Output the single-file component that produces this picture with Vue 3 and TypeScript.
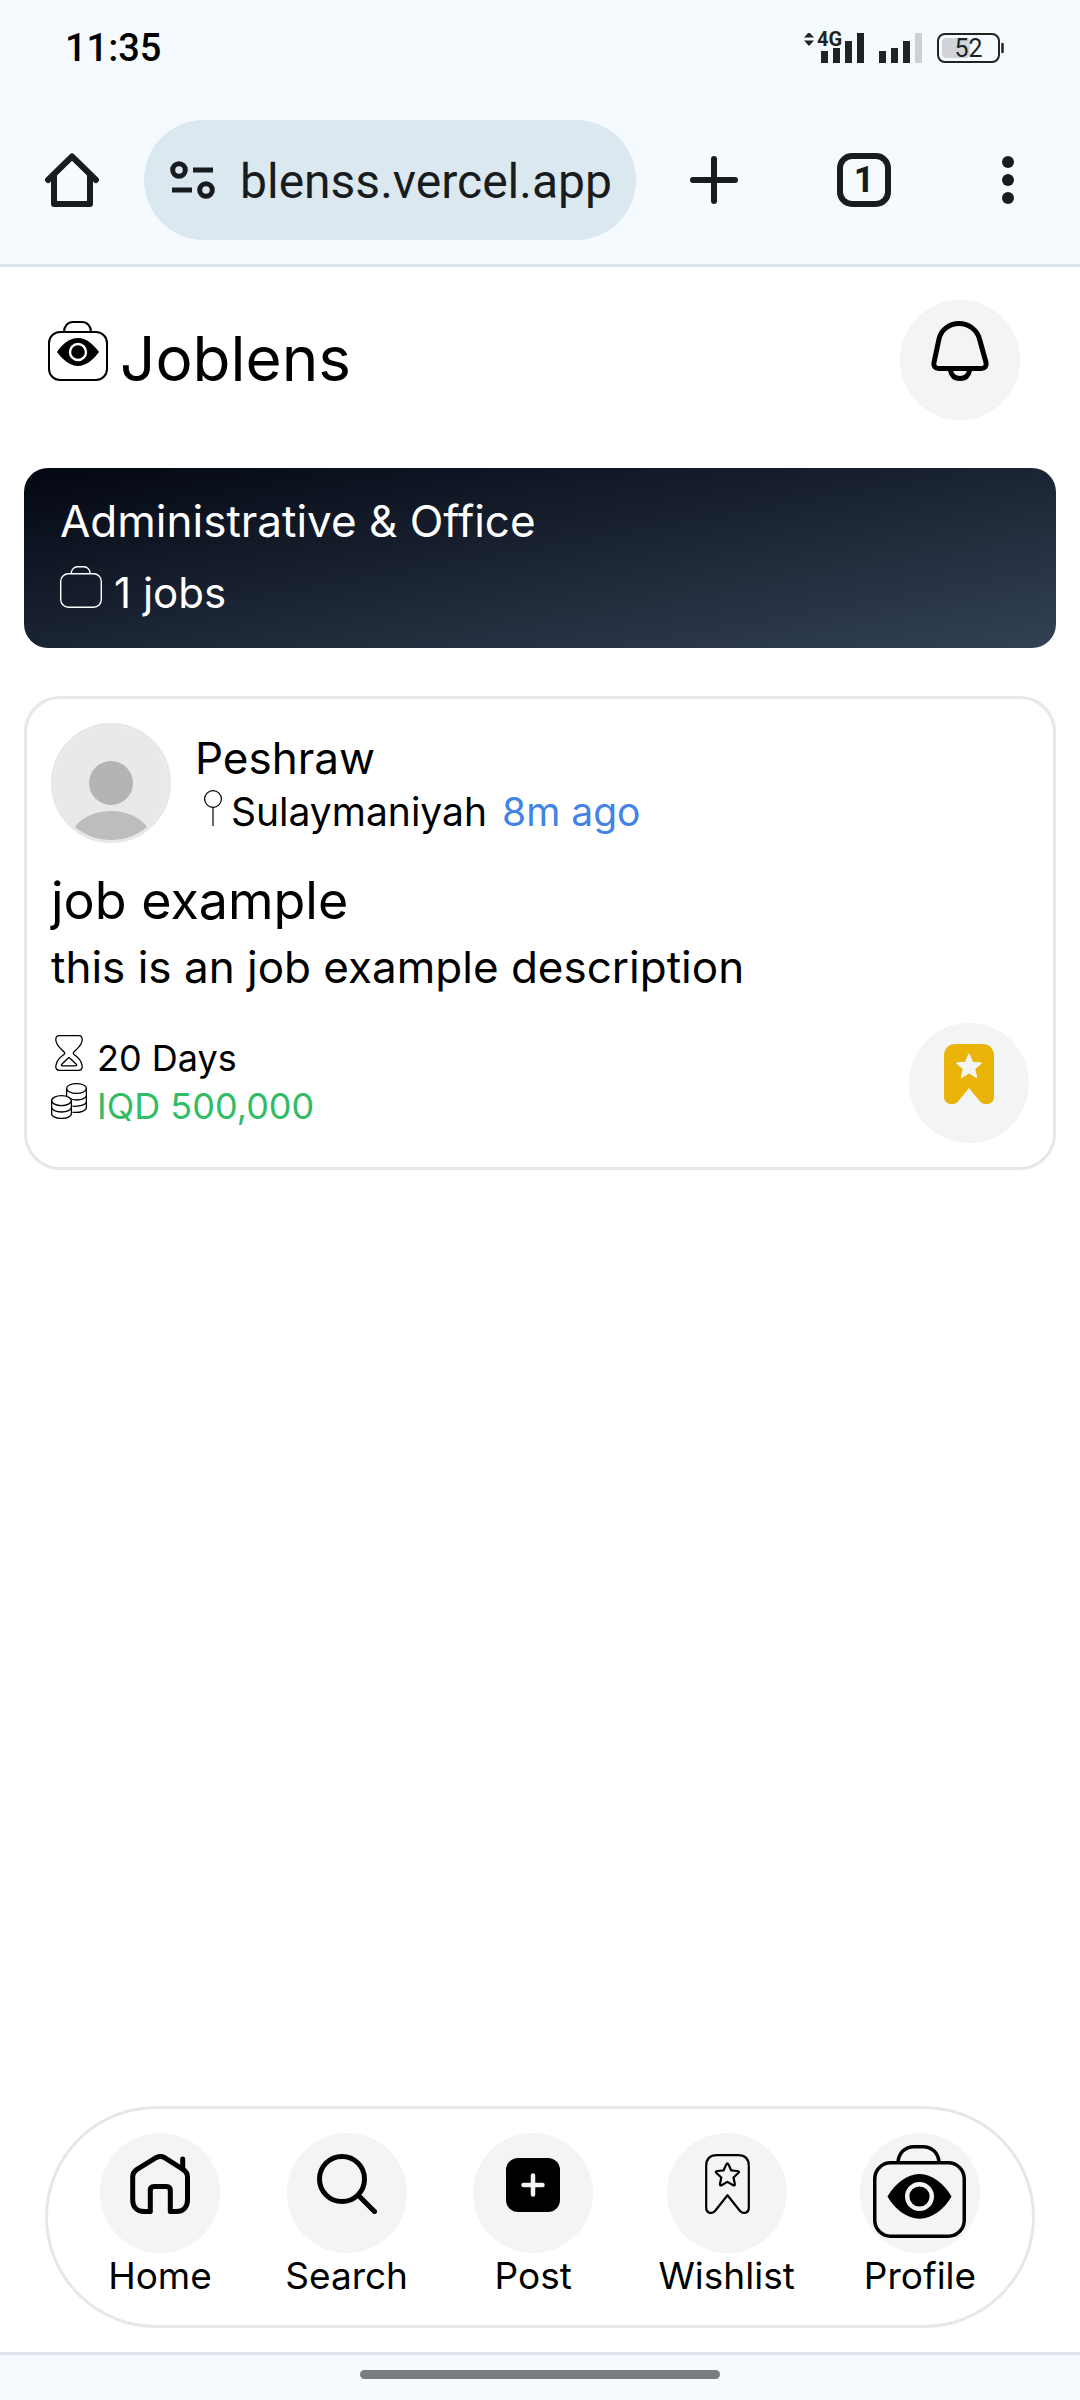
<script setup lang="ts">
import { ref } from 'vue'

interface NavItem {
  id: string
  label: string
}

const address = ref('blenss.vercel.app')

const navItems: NavItem[] = [
  { id: 'home', label: 'Home' },
  { id: 'search', label: 'Search' },
  { id: 'post', label: 'Post' },
  { id: 'wishlist', label: 'Wishlist' },
  { id: 'profile', label: 'Profile' },
]

// Five-pointed star with rounded tips.
function starPath(cx: number, cy: number, outer: number, inner: number): string {
  const point = (radius: number, degrees: number) => {
    const a = (degrees * Math.PI) / 180
    return { x: cx + radius * Math.cos(a), y: cy + radius * Math.sin(a) }
  }
  const f = (n: number) => n.toFixed(2)
  let d = ''
  for (let i = 0; i < 5; i++) {
    const angle = -90 + i * 72
    const tip = point(outer, angle)
    const before = point(inner, angle - 36)
    const after = point(inner, angle + 36)
    const t = 0.68
    const ax = before.x + (tip.x - before.x) * t
    const ay = before.y + (tip.y - before.y) * t
    const bx = after.x + (tip.x - after.x) * t
    const by = after.y + (tip.y - after.y) * t
    d += `${i === 0 ? 'M' : 'L'}${f(ax)} ${f(ay)} Q${f(tip.x)} ${f(tip.y)} ${f(bx)} ${f(by)} L${f(after.x)} ${f(after.y)} `
  }
  return d + 'Z'
}

const outlineStar = starPath(30.4, 21.5, 13.5, 6.4)
const solidStar = starPath(30, 23, 15, 6.6)
</script>

<template>
  <div class="screen">
    <div class="status">
      <time class="clock">11:35</time>
      <div class="indicators">
        <div class="signal">
          <svg width="60" height="30" viewBox="0 0 60 30" aria-hidden="true">
            <path d="M0 4.500 L5 -1 L10 4.500Z M0 7.500 H10 L5 13Z" fill="#222" />
            <path d="M17 18h7v12h-7z M29 15h7v15h-7z M41 8h7v22h-7z M53 0h7v30h-7z" fill="#222" />
          </svg>
          <span class="network">4G</span>
        </div>
        <svg width="43" height="30" viewBox="0 0 43 30" aria-hidden="true">
          <path d="M0 18h7v12H0z M12 15h7v15h-7z M24 8h7v22h-7z" fill="#222" />
          <path d="M36 0h7v30h-7z" fill="#cdd0d4" />
        </svg>
        <div class="battery">
          <svg width="67" height="30" viewBox="0 0 67 30" aria-hidden="true">
            <rect x="5" y="5" width="28" height="20" rx="4" fill="#d0d4d8" />
            <rect x="1" y="1" width="61" height="28" rx="7" fill="none" stroke="#222" stroke-width="2" />
            <path d="M65.500 11V19" stroke="#222" stroke-width="2.500" stroke-linecap="round" />
          </svg>
          <span class="charge">52</span>
        </div>
      </div>
    </div>

    <div class="toolbar">
      <button class="tool" type="button" aria-label="Home page">
        <svg width="54" height="54" viewBox="0 0 54 54" fill="none" stroke="#191c1e" stroke-width="6" stroke-linecap="round" stroke-linejoin="round">
          <path d="M3 27 L27 3.500 L51 27" />
          <path d="M9 22 V51 H45 V22" />
        </svg>
      </button>
      <div class="address">
        <button class="tool" type="button" aria-label="Site settings">
          <svg width="46" height="40" viewBox="0 0 46 40" fill="none" stroke="#191c1e" stroke-width="5">
            <circle cx="9" cy="10" r="6.300" />
            <circle cx="36" cy="30" r="6.300" />
            <path d="M23 10 H43 M2 30 H22" />
          </svg>
        </button>
        <input v-model="address" class="url" type="text" aria-label="Address" />
      </div>
      <div class="actions">
        <button class="tool" type="button" aria-label="New tab">
          <svg width="54" height="54" viewBox="0 0 54 54" stroke="#191c1e" stroke-width="6" stroke-linecap="round">
            <path d="M27 6 V48 M6 27 H48" />
          </svg>
        </button>
        <button class="tool tabs" type="button" aria-label="Open tabs: 1">1</button>
        <button class="tool" type="button" aria-label="More options">
          <svg width="42" height="54" viewBox="0 0 42 54" fill="#191c1e">
            <circle cx="21" cy="9" r="6" />
            <circle cx="21" cy="27" r="6" />
            <circle cx="21" cy="45" r="6" />
          </svg>
        </button>
      </div>
    </div>

    <div class="page">
      <header class="masthead">
        <h1 class="brand">
          <svg width="60" height="60" viewBox="0 0 60 60" aria-hidden="true">
            <g fill="none" stroke="#000" stroke-width="2">
              <rect x="1" y="11" width="58" height="48" rx="11" />
              <path d="M16 11 C16 5 20 1 25 1 H34 C39 1 43 5 43 11" />
            </g>
            <path d="M9 31 C14 23 22 17 30 17 S45 23 51 31 C46 38 38 45 30 45 S14 38 9 31Z" />
            <circle cx="30" cy="31" r="8" fill="#000" stroke="#fff" stroke-width="2.400" />
          </svg>
          <span>Joblens</span>
        </h1>
        <button class="round" type="button" aria-label="Notifications">
          <svg width="60" height="60" viewBox="0 0 60 60" fill="none" stroke="#000" stroke-width="5" stroke-linejoin="round">
            <path d="M29 2.500 C19 2.500 11 9 9 18 L4 41.500 C3.200 45 5 47.500 8.500 47.500 H51.500 C55 47.500 56.800 45 56 41.500 L49.500 18 C47 9 39 2.500 29 2.500Z" />
            <path d="M20.500 49.500 C21.500 54.500 25 57.500 30 57.500 S38.500 54.500 39.500 49.500" />
          </svg>
        </button>
      </header>

      <main class="content">
        <section class="banner">
          <h2 class="banner-title">Administrative &amp; Office</h2>
          <p class="banner-count">
            <svg width="42" height="42" viewBox="0 0 60 60" fill="none" stroke="#fff" stroke-width="2" aria-hidden="true">
              <rect x="1" y="11" width="58" height="48" rx="11" />
              <path d="M16 11 C16 5 20 1 25 1 H34 C39 1 43 5 43 11" />
            </svg>
            <span>1 jobs</span>
          </p>
        </section>

        <article class="card">
          <div class="poster">
            <svg class="avatar" viewBox="3 3 114 114" role="img" aria-label="Peshraw">
              <rect width="120" height="120" fill="#e9e9e9" />
              <circle cx="60" cy="60" r="22" fill="#b4b4b4" />
              <ellipse cx="60" cy="118" rx="41" ry="30" fill="#bdbdbd" />
            </svg>
            <div class="poster-info">
              <h3 class="name">Peshraw</h3>
              <p class="meta">
                <svg width="36" height="36" viewBox="0 0 36 36" fill="none" stroke="#000" stroke-width="1.200" aria-hidden="true">
                  <circle cx="18" cy="9" r="8.400" />
                  <path d="M18 17.500 V36" />
                </svg>
                <span>Sulaymaniyah</span>
                <span class="ago">8m ago</span>
              </p>
            </div>
          </div>
          <h4 class="title">job example</h4>
          <p class="description">this is an job example description</p>
          <div class="terms">
            <div class="term-list">
              <p class="term">
                <svg width="36" height="36" viewBox="0 0 36 36" fill="none" stroke="#000" stroke-width="1.300" stroke-linejoin="round" aria-hidden="true">
                  <path d="M8.500 .7 H27.500 C30.500 .7 31.300 2.500 31.200 5 C30.800 11 26 13.500 22.500 17.500 Q22 18.200 22.500 19 C26.500 22 30.500 25 31.200 31 C31.500 34 30 35.300 27.500 35.300 H8.500 C6 35.300 4.500 34 4.800 31 C5.500 25 9.500 22 13.500 19 Q14 18.200 13.500 17.500 C10 13.500 5.200 11 4.800 5 C4.700 2.500 5.500 .7 8.500 .7Z" />
                  <path d="M17 23.200 Q18 22.300 19 23.200 L25.500 29.500 Q26 30.800 24.500 30.800 H11.500 Q10 30.800 10.500 29.500Z" />
                </svg>
                <span>20 Days</span>
              </p>
              <p class="term">
                <svg width="36" height="36" viewBox="0 0 36 36" fill="none" stroke="#000" stroke-width="1.300" aria-hidden="true">
                  <ellipse cx="25.500" cy="5.500" rx="9.900" ry="4.900" />
                  <path d="M15.600 5.500 V13 M35.400 5.500 V24.500 C35.400 27.500 30 30 21.500 29.300 M35.400 12 C35.400 15 31 17 25.500 17 Q21.500 16.800 19 15.500 M35.400 18.500 C35.400 21.500 30 23.700 21.500 23.200" />
                  <ellipse cx="10.500" cy="17.600" rx="9.900" ry="5" fill="#fff" />
                  <path d="M.6 17.600 V30.500 C.6 33.500 5 35.400 10.500 35.400 S20.400 33.500 20.400 30.500 V17.600 M.6 24 C.6 27 5 29 10.500 29 S20.400 27 20.400 24" />
                </svg>
                <span class="salary">IQD 500,000</span>
              </p>
            </div>
            <button class="round" type="button" aria-label="Remove from wishlist">
              <svg width="60" height="60" viewBox="0 0 60 60">
                <path d="M5 12 C5 4.500 9.500 0 17 0 H43 C50.500 0 55 4.500 55 12 V53 C55 60 46 62.500 41 57.500 L30 44 L19 57.500 C14 62.500 5 60 5 53Z" fill="#eab308" />
                <path :d="solidStar" fill="#f3f4f6" />
              </svg>
            </button>
          </div>
        </article>
      </main>

      <nav class="nav" aria-label="Main">
        <a v-for="item in navItems" :key="item.id" class="nav-item" :href="'#' + item.id">
          <span class="round" :class="{ centered: item.id === 'profile' }">
            <svg v-if="item.id === 'home'" width="60" height="60" viewBox="0 0 60 60" fill="none" stroke="#000" stroke-width="5" stroke-linecap="round" stroke-linejoin="round">
              <path d="M20.300 57.500 H14 C7 57.500 2.700 53 2.700 46 V23 C2.700 19.500 4 17.300 7 15.300 L26 3.700 C29 2.100 32 2.100 34.500 3.700 L53 15.300 C56 17.300 57.500 19.500 57.500 23 V46 C57.500 53 53 57.500 46 57.500 H40.300 V36.500 C40.300 34 39 32.500 36.500 32.500 H24 C21.500 32.500 20.300 34 20.300 36.500Z" />
              <path d="M52.700 5 V15" />
            </svg>
            <svg v-else-if="item.id === 'search'" width="60" height="60" viewBox="0 0 60 60" fill="none" stroke="#000" stroke-width="5" stroke-linecap="round">
              <circle cx="25" cy="25" r="22.500" />
              <path d="M42 42 L57.500 57.500" />
            </svg>
            <svg v-else-if="item.id === 'post'" width="60" height="60" viewBox="0 0 60 60">
              <rect x="3" y="4" width="54" height="54" rx="12" />
              <path d="M30 21.500 V40.500 M20.500 31 H39.500" stroke="#f3f4f6" stroke-width="4.500" stroke-linecap="round" />
            </svg>
            <svg v-else-if="item.id === 'wishlist'" width="60" height="60" viewBox="0 0 60 60" fill="none" stroke="#000" stroke-width="2.200" stroke-linejoin="round">
              <path d="M9.200 12 C9.200 5 13 1.200 20 1.200 H41 C48 1.200 51.800 5 51.800 12 V54 C51.800 59 46.500 60.500 43 57 L30.500 41.200 L18 57 C14.500 60.500 9.200 59 9.200 54Z" />
              <path :d="outlineStar" />
            </svg>
            <svg v-else width="93" height="93" viewBox="0 0 93 93">
              <g fill="none" stroke="#000" stroke-width="3.500">
                <rect x="1.750" y="17.750" width="89.500" height="73.500" rx="16" />
                <path d="M25 17.500 C25.500 8 32 1.800 41 1.800 H50 C59 1.800 65.500 8 66 17.500" />
              </g>
              <path d="M14.500 51.500 C22 38.500 34 29 46.500 29 S71 38.500 78.500 51.500 C71 64.500 59 73.700 46.500 73.700 S22 64.500 14.500 51.500Z" />
              <circle cx="46.500" cy="51.500" r="12.300" fill="#000" stroke="#f3f4f6" stroke-width="4.400" />
            </svg>
          </span>
          <span class="nav-label">{{ item.label }}</span>
        </a>
      </nav>
    </div>

    <div class="gesture"><span class="handle"></span></div>
  </div>
</template>

<style>
body {
  margin: 0;
  background: #fff;
}
</style>

<style scoped>
.screen {
  display: flex;
  flex-direction: column;
  min-height: 100vh;
  background: #fff;
  color: #000;
  font-family: Inter, "Open Sans", sans-serif;
}

.screen svg {
  display: block;
  flex: none;
}

h1,
h2,
h3,
h4,
p {
  margin: 0;
  font-weight: 400;
}

button {
  padding: 0;
  border: 0;
  background: none;
  color: inherit;
  font: inherit;
}

/* Phone status bar */
.status {
  display: flex;
  box-sizing: border-box;
  align-items: center;
  justify-content: space-between;
  height: 96px;
  padding: 0 76px 0 65px;
  background: #f5faff;
  font-family: Roboto, sans-serif;
}

.clock {
  font-size: 38px;
  line-height: 40px;
  font-weight: 500;
}

.indicators {
  display: flex;
  gap: 15px;
  color: #222;
}

.signal,
.battery {
  position: relative;
}

.network {
  position: absolute;
  top: -4px;
  left: 13px;
  font-size: 20px;
  line-height: 20px;
  font-weight: 700;
}

.charge {
  position: absolute;
  inset: 0 4px 0 0;
  font-size: 25px;
  line-height: 32px;
  text-align: center;
}

/* Browser toolbar */
.toolbar {
  display: flex;
  align-items: center;
  padding: 24px 51px 24px 45px;
  border-bottom: 3px solid #dde3e8;
  background: #f5faff;
  color: #191c1e;
  font-family: Roboto, sans-serif;
}

.address {
  display: flex;
  flex: 1;
  align-items: center;
  gap: 24px;
  min-width: 0;
  height: 120px;
  margin: 0 51px 0 45px;
  padding: 0 24px 0 26px;
  border-radius: 60px;
  background: #dbe8ef;
}

.url {
  flex: 1;
  min-width: 0;
  padding: 2px 0 0;
  border: 0;
  outline: 0;
  background: none;
  color: inherit;
  font-family: inherit;
  font-size: 48px;
}

.actions {
  display: flex;
  align-items: center;
  gap: 96px;
}

.tabs {
  box-sizing: border-box;
  width: 54px;
  height: 54px;
  border: 6px solid #191c1e;
  border-radius: 15px;
  font-size: 36px;
  line-height: 42px;
  font-weight: 700;
  text-align: center;
}

/* Page */
.page {
  display: flex;
  flex: 1;
  flex-direction: column;
}

.masthead {
  display: flex;
  align-items: center;
  justify-content: space-between;
  padding: 33px 60px 48px 48px;
}

.brand {
  display: flex;
  align-items: baseline;
  gap: 12px;
  padding-bottom: 2px;
  font-size: 62px;
  line-height: 90px;
}

.round {
  display: flex;
  box-sizing: border-box;
  flex: none;
  align-items: flex-start;
  justify-content: center;
  width: 120px;
  height: 120px;
  padding-top: 21px;
  border-radius: 50%;
  background: #f3f4f6;
}

.round.centered {
  align-items: center;
  padding: 0 0 4px;
}

.content {
  display: flex;
  flex: 1;
  flex-direction: column;
  gap: 48px;
  padding: 0 24px;
}

.banner {
  padding: 17px 36px 19px;
  border-radius: 24px;
  background: linear-gradient(to bottom right, #030712, #334155);
  color: #fff;
  font-size: 42px;
  line-height: 72px;
}

.banner-title {
  font-size: 44px;
}

.banner-count {
  display: flex;
  align-items: baseline;
  gap: 12px;
}

.card {
  padding: 24px;
  border: 3px solid #e5e7eb;
  border-radius: 36px;
}

.poster {
  display: flex;
  align-items: center;
  gap: 24px;
  margin-bottom: 24px;
}

.poster-info {
  padding-bottom: 2px;
}

.avatar {
  box-sizing: border-box;
  width: 120px;
  height: 120px;
  border: 3px solid #e5e7eb;
  border-radius: 50%;
}

.name {
  font-size: 44px;
  line-height: 60px;
}

.meta {
  display: flex;
  align-items: baseline;
  font-size: 39px;
  line-height: 48px;
}

.ago {
  margin-left: 15px;
  color: #4382e6;
}

.title {
  font-size: 52px;
  line-height: 68px;
}

.description {
  font-size: 44px;
  line-height: 64px;
}

.terms {
  display: flex;
  align-items: center;
  justify-content: space-between;
  margin-top: 24px;
}

.term-list {
  padding-bottom: 2px;
}

.term {
  display: flex;
  align-items: baseline;
  gap: 10px;
  font-size: 36px;
  line-height: 48px;
}

.salary {
  color: #34bb66;
}

.nav {
  display: flex;
  justify-content: space-between;
  margin: 0 45px 24px;
  padding: 24px 52px 26px;
  border: 3px solid #e5e7eb;
  border-radius: 111px;
  background: #fff;
}

.nav-item {
  display: flex;
  flex-direction: column;
  align-items: center;
  color: inherit;
  text-decoration: none;
}

.nav-label {
  font-size: 37px;
  line-height: 46px;
}

/* Gesture bar */
.gesture {
  display: flex;
  justify-content: center;
  padding: 15px 0 21px;
  border-top: 3px solid #dde3e8;
  background: #f5faff;
}

.handle {
  width: 360px;
  height: 9px;
  border-radius: 5px;
  background: #7a7d80;
}
</style>
